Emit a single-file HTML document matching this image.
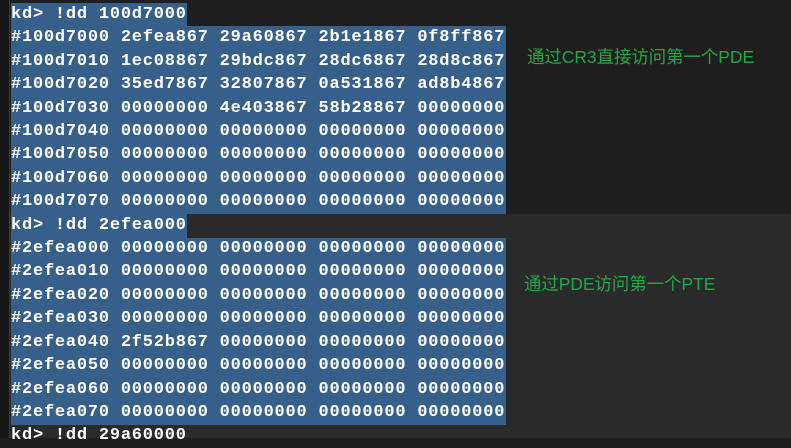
<!DOCTYPE html>
<html><head><meta charset="utf-8"><style>
html,body{margin:0;padding:0;width:791px;height:438px;overflow:hidden;background:#1e1e1e;}
.bot{position:absolute;left:0;top:214px;width:791px;height:224px;background:#2a2a2a;}
.strip{position:absolute;left:0;top:0;width:9px;height:438px;background:#161616;border-right:1px solid #3a3a3a;}
.sel{position:absolute;background:#365f8a;}
.t{position:absolute;left:11px;font-family:"Liberation Mono",monospace;font-size:17px;font-weight:bold;letter-spacing:0.78px;color:#fff;white-space:pre;line-height:23.4px;}
.n{position:absolute;font-family:"Liberation Sans","Noto Sans CJK SC",sans-serif;font-size:17.4px;color:#22a845;white-space:nowrap;}
</style></head><body>
<div class="bot"></div>
<div class="strip"></div>
<div class="sel" style="left:11px;top:3px;width:176px;height:23px"></div>
<div class="sel" style="left:11px;top:26px;width:495px;height:188px"></div>
<div class="sel" style="left:11px;top:214px;width:176px;height:24px"></div>
<div class="sel" style="left:11px;top:238px;width:495px;height:187px"></div>
<div class="t" style="top:3px">kd&gt; !dd 100d7000
#100d7000 2efea867 29a60867 2b1e1867 0f8ff867
#100d7010 1ec08867 29bdc867 28dc6867 28d8c867
#100d7020 35ed7867 32807867 0a531867 ad8b4867
#100d7030 00000000 4e403867 58b28867 00000000
#100d7040 00000000 00000000 00000000 00000000
#100d7050 00000000 00000000 00000000 00000000
#100d7060 00000000 00000000 00000000 00000000
#100d7070 00000000 00000000 00000000 00000000
kd&gt; !dd 2efea000
#2efea000 00000000 00000000 00000000 00000000
#2efea010 00000000 00000000 00000000 00000000
#2efea020 00000000 00000000 00000000 00000000
#2efea030 00000000 00000000 00000000 00000000
#2efea040 2f52b867 00000000 00000000 00000000
#2efea050 00000000 00000000 00000000 00000000
#2efea060 00000000 00000000 00000000 00000000
#2efea070 00000000 00000000 00000000 00000000
kd&gt; !dd 29a60000</div>
<div class="n" style="left:527px;top:44px">通过CR3直接访问第一个PDE</div>
<div class="n" style="left:524px;top:271px">通过PDE访问第一个PTE</div>
</body></html>
